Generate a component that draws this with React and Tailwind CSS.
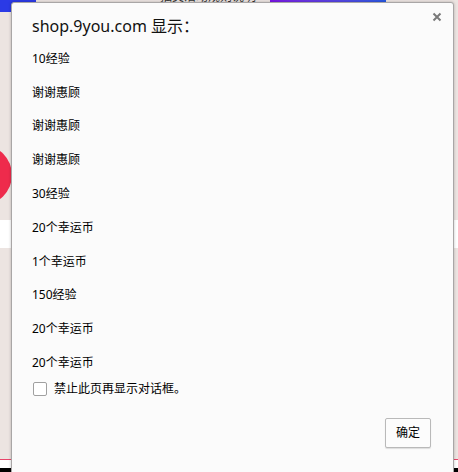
import React from 'react';

const ITEMS = ['10经验', '谢谢惠顾', '谢谢惠顾', '谢谢惠顾', '30经验', '20个幸运币', '1个幸运币', '150经验', '20个幸运币', '20个幸运币'];

const App = () => {
  return (
    <div
      className="relative w-[458px] h-[472px] overflow-hidden bg-[#ece4e1]"
      style={{ fontFamily: '"Noto Sans", "Noto Sans CJK SC", sans-serif' }}
    >
      {/* page behind the dialog */}
      <div className="flex flex-col h-full">
        <div className="flex h-[12px]">
          <div className="w-[36px] bg-[#2b3ae6]" />
          <div className="w-[234px] h-[3px] overflow-hidden">
            <div className="pl-[124px] mt-[-9px] text-[12px] leading-[12px] text-[#333]">抽奖活动规则说明</div>
          </div>
          <div className="w-[116px] h-[3px] bg-gradient-to-r from-[#7a12e6] to-[#2458e2]" />
        </div>
        <div className="h-[133px]" />
        <div className="h-[60px] w-[60px] ml-[-48px] rounded-full bg-[#ee2b4c]" />
        <div className="h-[15px]" />
        <div className="h-[28px] bg-white" />
        <div className="flex-1" />
        <div className="h-[1px] bg-[#e8456a]" />
        <div className="h-[8px] bg-white" />
        <div className="h-[4px] bg-black" />
      </div>

      {/* alert dialog */}
      <div className="absolute left-[11px] top-[2px] w-[443px] h-[480px] bg-[#fbfbfb] border border-[#a9a6a6] rounded-t-[3px] shadow-[0_0_3px_rgba(0,0,0,0.25)]">
        <button className="absolute right-[10px] top-[8px] w-[12px] h-[12px] flex items-center justify-center text-[#7a7a7a]">
          <svg width="10" height="10" viewBox="0 0 10 10">
            <path d="M1.5 1.5 L8.5 8.5 M8.5 1.5 L1.5 8.5" stroke="currentColor" strokeWidth="2" />
          </svg>
        </button>

        <div className="pl-[20px] pt-[13px]">
          <div className="h-[20px] flex items-center text-[16px] text-[#111]">shop.9you.com 显示：</div>

          <div className="flex flex-col pt-[6px]">
            {ITEMS.map((item, i) => (
              <div key={i} className="h-[33.8px] flex items-center text-[12px] text-black">{item}</div>
            ))}
          </div>

          <label className="h-[18px] flex items-center gap-[7px] pl-[1px] text-[12px] text-black">
            <span className="w-[14px] h-[14px] rounded-[2px] border border-[#a0a0a0] bg-white" />
            禁止此页再显示对话框。
          </label>
        </div>

        <div className="flex justify-end pr-[22px] pt-[20px]">
          <button className="w-[46px] h-[30px] border border-[#b9b9b9] rounded-[2px] bg-[#fcfcfc] shadow-[0_1px_1px_rgba(0,0,0,0.12)] text-[12px] text-black flex items-center justify-center">
            确定
          </button>
        </div>
      </div>
    </div>
  );
};

export default App;
